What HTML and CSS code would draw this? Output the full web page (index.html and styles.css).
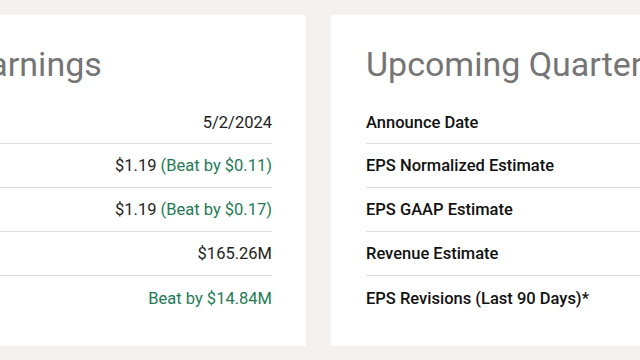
FILE: index.html
```html
<!DOCTYPE html>
<html lang="en">
<head>
<meta charset="utf-8">
<title>Earnings</title>
<link rel="stylesheet" href="styles.css">
</head>
<body>
<div class="page">
  <section class="card">
    <h2 class="card-title">Last Quarter Earnings</h2>
    <div class="rows">
      <div class="row"><span class="label">Announce Date</span><span class="value">5/2/2024</span></div>
      <div class="row"><span class="label">EPS Normalized Actual</span><span class="value">$1.19 <span class="beat">(Beat by $0.11)</span></span></div>
      <div class="row"><span class="label">EPS GAAP Actual</span><span class="value">$1.19 <span class="beat">(Beat by $0.17)</span></span></div>
      <div class="row"><span class="label">Revenue Actual</span><span class="value">$165.26M</span></div>
      <div class="row"><span class="label">Revenue Surprise</span><span class="value"><span class="beat">Beat by $14.84M</span></span></div>
    </div>
  </section>
  <section class="card">
    <h2 class="card-title">Upcoming Quarter</h2>
    <div class="rows">
      <div class="row"><span class="label">Announce Date</span><span class="value">8/1/2024</span></div>
      <div class="row"><span class="label">EPS Normalized Estimate</span><span class="value">$1.24</span></div>
      <div class="row"><span class="label">EPS GAAP Estimate</span><span class="value">$1.22</span></div>
      <div class="row"><span class="label">Revenue Estimate</span><span class="value">$160.41M</span></div>
      <div class="row"><span class="label">EPS Revisions (Last 90 Days)*</span><span class="value">2 Up / 0 Down</span></div>
    </div>
  </section>
</div>
</body>
</html>
```
FILE: styles.css
```css
html, body {
  margin: 0;
  padding: 0;
  background: #f4f1ef;
  overflow: hidden;
}
body {
  font-family: Roboto, "Liberation Sans", Arial, sans-serif;
  color: #222;
}
.page {
  display: grid;
  grid-template-columns: 567px 560px;
  column-gap: 25px;
  margin-left: -261px;
  padding-top: 15px;
  width: 1152px;
}
.card {
  background: #fff;
  padding: 29px 34px 27px 35px;
  height: 331px;
  box-sizing: border-box;
}
.card-title {
  margin: 0 0 17px 0;
  font-size: 34px;
  line-height: 40px;
  font-weight: 400;
  color: #757575;
  white-space: nowrap;
}
.rows {
  display: flex;
  flex-direction: column;
}
.row {
  display: flex;
  justify-content: space-between;
  align-items: center;
  height: 44px;
  box-sizing: border-box;
  font-size: 16.5px;
  border-bottom: 1px solid #dcdcdc;
}
.row:first-child {
  height: 43px;
}
.row:last-child {
  border-bottom: none;
}
.label {
  font-weight: 500;
  color: #111;
}
.value {
  color: #222;
}
.beat {
  color: #237a55;
}
```
